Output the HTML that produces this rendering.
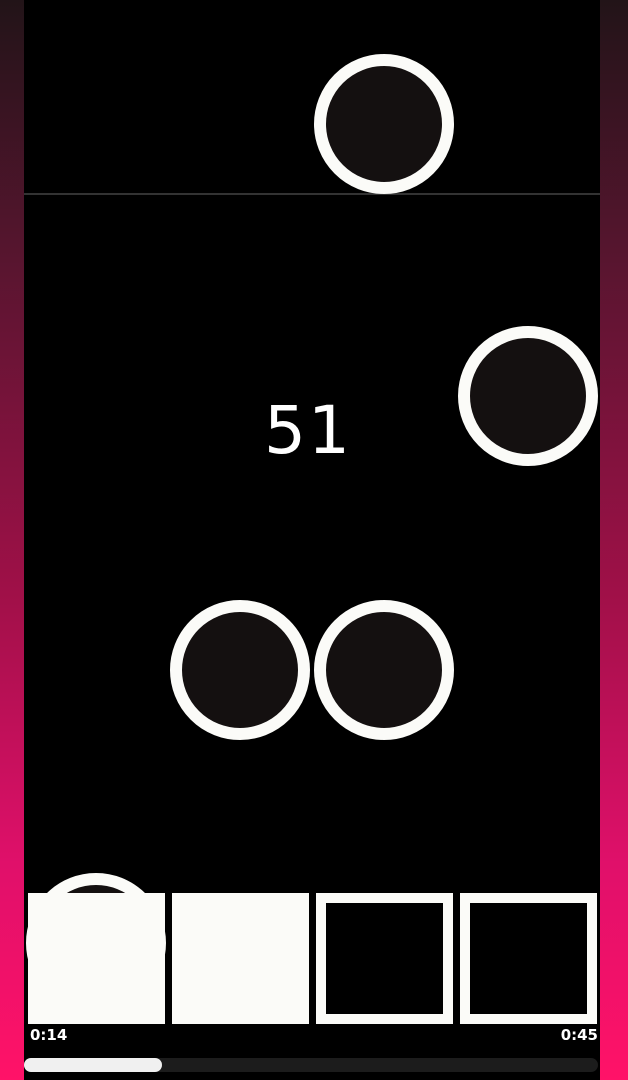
<!DOCTYPE html>
<html><head><style>
body{margin:0;width:628px;height:1080px;overflow:hidden;background:linear-gradient(#221418 0%,#5a1530 25%,#a01048 55%,#e0106a 80%,#ff1268 100%);position:relative;font-family:"DejaVu Sans","Liberation Sans",sans-serif}
#m{position:absolute;left:24px;top:0;width:576px;height:1080px;background:#000;overflow:hidden}
.c{position:absolute;width:116px;height:116px;border:12px solid #fbfbf8;border-radius:50%;background:#141010}
.s{position:absolute;top:893px;width:137px;height:131px;background:#fbfbf8;box-sizing:border-box}
.o{border:10px solid #fbfbf8;background:#000}
.t{position:absolute;top:1026px;color:#fff;font:bold 15px "DejaVu Sans",sans-serif}
</style></head><body>
<div id="m">
<div style="position:absolute;left:0;top:193px;width:576px;height:2px;background:#333"></div>
<div class="c" style="left:290px;top:54px"></div>
<div class="c" style="left:434px;top:326px"></div>
<div class="c" style="left:146px;top:600px"></div>
<div class="c" style="left:290px;top:600px"></div>
<div class="c" style="left:2px;top:873px"></div>
<div style="position:absolute;left:0;width:576px;top:392px;text-align:center;color:#fff;font-size:66px;letter-spacing:2px;margin-left:-4px">51</div>
<div class="s" style="left:4px"></div>
<div class="s" style="left:148px"></div>
<div class="s o" style="left:292px"></div>
<div class="s o" style="left:436px"></div>
<div class="t" style="left:6px">0:14</div>
<div class="t" style="right:2px">0:45</div>
<div style="position:absolute;left:0;top:1058px;width:574px;height:14px;border-radius:7px;background:#1c1c1c"></div>
<div style="position:absolute;left:0;top:1058px;width:138px;height:14px;border-radius:7px;background:#f0f0f0"></div>
</div>
</body></html>
